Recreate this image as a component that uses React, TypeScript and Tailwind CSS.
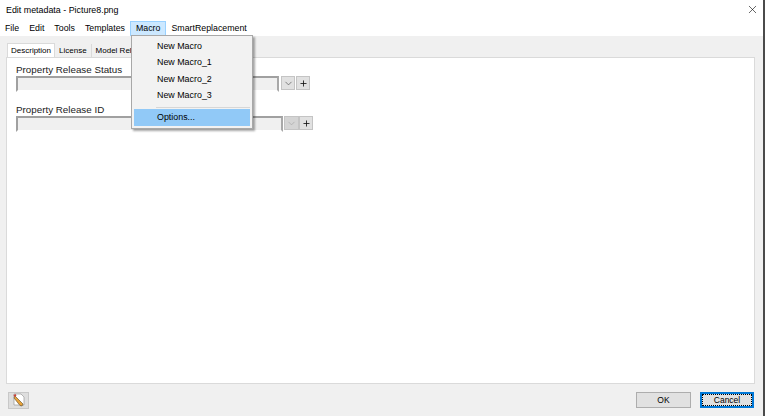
import { ChevronDown, Plus, X } from "lucide-react";

const menus = ["File", "Edit", "Tools", "Templates", "Macro", "SmartReplacement"];
const macros = ["New Macro", "New Macro_1", "New Macro_2", "New Macro_3"];

const Field = ({ label, width, disabled, gap }: { label: string; width: string; disabled?: boolean; gap: string }) => (
  <div className={gap}>
    <div className="h-[13px] text-[9.8px] leading-[13px] text-[#222]">{label}</div>
    <div className="flex h-[16px] items-start">
      <div className={`h-[16px] ${width} border-2 border-b-white border-r-[#a8a8a8] border-l-[#a0a0a0] border-t-[#a0a0a0] bg-[#f0f0f0]`} />
      <div className={`${disabled ? "ml-px w-[15px]" : "ml-[2px] w-[14px]"} flex h-[14px] items-center justify-center border border-[#c4c4c4] ${disabled ? "bg-[#d4d4d4]" : "bg-[#e1e1e1]"}`}>
        <ChevronDown size={11} strokeWidth={1.5} className={disabled ? "text-[#a8a8a8]" : "text-[#555]"} />
      </div>
      <div className={`${disabled ? "" : "ml-px"} flex h-[14px] w-[14px] items-center justify-center border border-[#c4c4c4] bg-[#e1e1e1]`}>
        <Plus size={9} strokeWidth={2.2} className="text-[#111]" />
      </div>
    </div>
  </div>
);

export default function App() {
  return (
    <div className="relative flex h-[416px] w-[765px] overflow-hidden bg-white font-['Liberation_Sans',sans-serif] text-[8.9px] text-black">
      <div className="flex h-full w-[763px] flex-col">
        <div className="flex h-[21px] items-center justify-between px-[6px]">
          <span>Edit metadata - Picture8.png</span>
          <X size={13} strokeWidth={1.1} className="mt-[-2px] mr-[-2px]" />
        </div>

        <div className="flex h-[15px] items-center text-[8.8px]">
          {menus.map((m) => (
            <div
              key={m}
              className={`flex h-[15px] items-center px-[5px] ${m === "Macro" ? "border border-[#99d1ff] bg-[#cce8ff] px-[4px]" : ""}`}
            >
              {m}
            </div>
          ))}
        </div>

        <div className="flex flex-1 flex-col bg-[#f0f0f0]">
          <div className="flex h-[21px] items-end pl-[7px] pt-[7px] text-[8px]">
            <div className="flex h-[14px] items-center border border-b-0 border-[#dadada] bg-white px-[3px]">Description</div>
            <div className="flex h-[13px] items-center border-r border-[#dadada] px-[4px]">License</div>
            <div className="flex h-[13px] items-center px-[4px]">Model Release</div>
          </div>
          <div className="ml-[6px] h-[327px] w-[749px] border border-[#dadada] bg-white pl-[9px] pt-[5px]">
            <Field label="Property Release Status" width="w-[263px]" gap="mb-[11px]" />
            <Field label="Property Release ID" width="w-[267px]" disabled gap="" />
          </div>
          <div className="flex flex-1 items-center justify-between pl-[8px] pr-[9px]">
            <div className="flex h-[17px] w-[21px] items-center justify-center border border-[#c8c8c8] bg-[#dedede]">
              <svg width="14" height="14" viewBox="0 0 14 14">
                <path d="M2 1h7l3 3v8H2z" fill="#fff" stroke="#9a9a9a" strokeWidth="0.7" />
                <path d="M3 3l8 8-1 2-2-.5L2 5z" fill="#e8a33a" stroke="#5a4a2a" strokeWidth="0.6" />
                <path d="M1.5 2l2-1 1 1.5-2 1.5z" fill="#c8423a" />
              </svg>
            </div>
            <div className="flex gap-[9px] text-[8.5px]">
              <div className="flex h-[16px] w-[55px] items-center justify-center border border-[#adadad] bg-[#e1e1e1]">OK</div>
              <div className="flex h-[16px] w-[54px] items-center justify-center border-2 border-[#0078d7] bg-[#e1e1e1] outline-1 -outline-offset-3 outline-dotted outline-black">Cancel</div>
            </div>
          </div>
        </div>
      </div>
      <div className="h-full w-[2px] bg-[#4b4b4b]" />

      <div className="absolute left-[131px] top-[35px] w-[122px] border border-[#a8a8a8] bg-[#f2f2f2] p-[2px] shadow-[2px_2px_2px_rgba(0,0,0,0.35)]">
        {macros.map((m) => (
          <div key={m} className="flex h-[16.5px] items-center pl-[23px]">{m}</div>
        ))}
        <div className="ml-[22px] mt-[3px] mb-[1px] h-px bg-[#d7d7d7]" />
        <div className="flex h-[17px] items-center bg-[#91c9f7] pl-[23px]">Options...</div>
      </div>
    </div>
  );
}
